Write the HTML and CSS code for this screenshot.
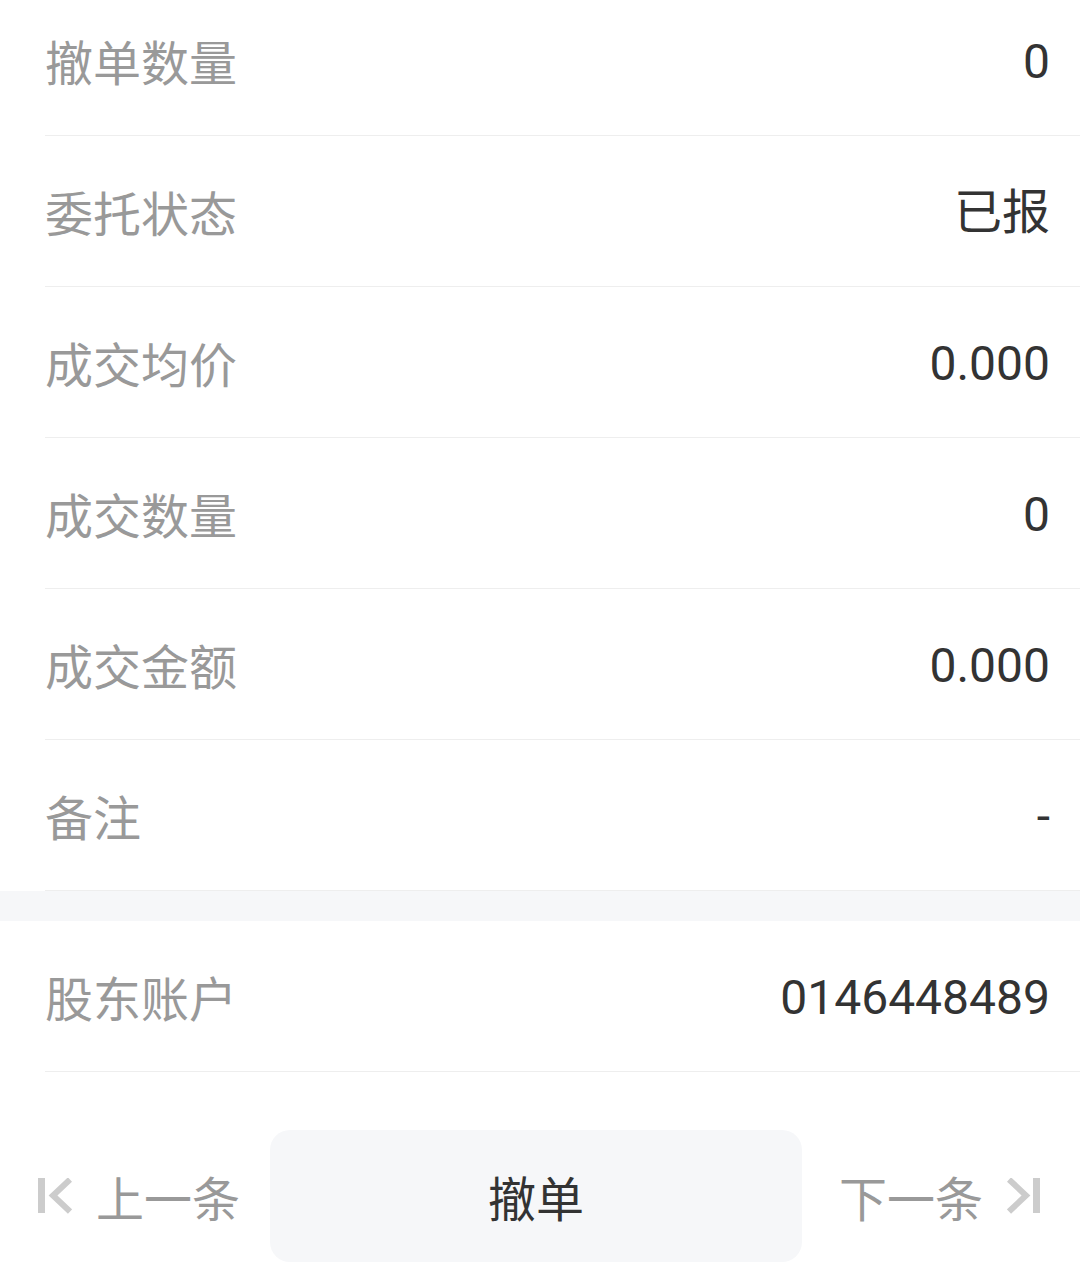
FILE: index.html
```html
<!DOCTYPE html>
<html lang="zh-CN">
<head>
<meta charset="utf-8">
<title>委托详情</title>
<link rel="stylesheet" href="styles.css">
</head>
<body>
<div class="page">
  <div class="list list-top">
    <div class="row"><span class="label">撤单数量</span><span class="value">0</span></div>
    <div class="row"><span class="label">委托状态</span><span class="value">已报</span></div>
    <div class="row"><span class="label">成交均价</span><span class="value">0.000</span></div>
    <div class="row"><span class="label">成交数量</span><span class="value">0</span></div>
    <div class="row"><span class="label">成交金额</span><span class="value">0.000</span></div>
    <div class="row"><span class="label">备注</span><span class="value">-</span></div>
  </div>
  <div class="gap"></div>
  <div class="list">
    <div class="row"><span class="label">股东账户</span><span class="value">0146448489</span></div>
  </div>
  <div class="actions">
    <div class="nav nav-prev">
      <svg class="nav-icon" width="34" height="36" viewBox="0 0 34 36" aria-hidden="true">
        <rect x="0" y="0" width="7" height="35" fill="#cccccc"/>
        <polyline points="32,1.5 15,17.5 32,33.5" fill="none" stroke="#cccccc" stroke-width="6"/>
      </svg>
      <span class="nav-text">上一条</span>
    </div>
    <div class="btn">撤单</div>
    <div class="nav nav-next">
      <span class="nav-text">下一条</span>
      <svg class="nav-icon" width="34" height="36" viewBox="0 0 34 36" aria-hidden="true">
        <polyline points="2,1.5 19,17.5 2,33.5" fill="none" stroke="#cccccc" stroke-width="6"/>
        <rect x="26" y="0" width="7" height="35" fill="#cccccc"/>
      </svg>
    </div>
  </div>
</div>
</body>
</html>
```

FILE: styles.css
```css
* {
  box-sizing: border-box;
}

html, body {
  margin: 0;
  padding: 0;
  background: #ffffff;
}

body {
  font-family: "Noto Sans CJK SC", "Noto Sans", sans-serif;
  overflow: hidden;
}

.page {
  width: 1080px;
  height: 1286px;
  overflow: hidden;
  display: flex;
  flex-direction: column;
}

.list-top {
  margin-top: -15px;
}

.row {
  height: 151px;
  margin-left: 45px;
  padding-right: 30px;
  border-bottom: 1px solid #eeeeee;
  display: flex;
  align-items: center;
  justify-content: space-between;
}

.label {
  font-size: 48px;
  color: #999999;
  line-height: 1;
}

.value {
  font-family: Roboto, "Noto Sans CJK SC", sans-serif;
  font-size: 48px;
  color: #333333;
  line-height: 1;
  padding-top: 3px;
}

.gap {
  height: 30px;
  background: #f6f7f9;
}

.actions {
  display: grid;
  grid-template-columns: 270px 532px 1fr;
  align-items: center;
  padding-top: 58px;
}

.nav {
  display: flex;
  align-items: center;
  gap: 24px;
  font-size: 48px;
  color: #999999;
}

.nav-prev {
  padding-left: 38px;
}

.nav-next {
  justify-content: flex-end;
  padding-right: 39px;
}

.nav-icon {
  display: block;
  flex: none;
}

.nav-text {
  line-height: 1;
}

.btn {
  height: 132px;
  border-radius: 20px;
  background: #f6f7f9;
  display: flex;
  align-items: center;
  justify-content: center;
  font-size: 48px;
  color: #333333;
}
```
